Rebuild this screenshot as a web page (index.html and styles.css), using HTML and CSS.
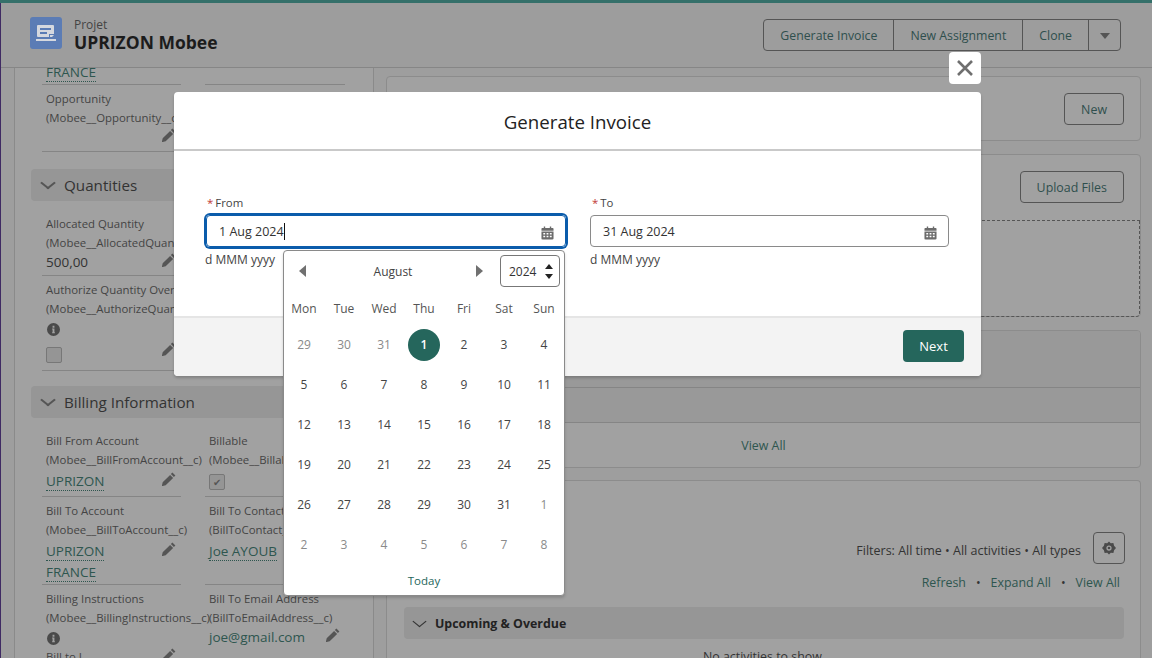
FILE: index.html
```html
<!DOCTYPE html>
<html lang="en">
<head>
    <meta charset="UTF-8">
    <title>UPRIZON Mobee</title>
    <link rel="stylesheet" href="styles.css">
</head>
<body>
    <svg class="sprites" width="0" height="0">
        <symbol id="pencil" viewBox="0 0 14 14"><path d="M10.400.6l3 3-1.500 1.500-3-3zM8.100 2.900l3 3-7.400 7.400-3.900.9.900-3.900z"/></symbol>
        <symbol id="info" viewBox="0 0 14 14"><path fill-rule="evenodd" d="M7 0a7 7 0 1 1 0 14A7 7 0 0 1 7 0zM6 3v2h2V3zM5.500 6v1H6v3H5.500v1h3v-1H8V6z"/></symbol>
        <symbol id="calendar" viewBox="0 0 14 14"><path fill-rule="evenodd" d="M3 0h1.500v1.500h5V0H11v1.500h1.500c.5 0 1 .5 1 1V4.500H.5v-2c0-.5.5-1 1-1H3zM.5 5.500h13V13c0 .5-.5 1-1 1h-11c-.5 0-1-.5-1-1zM2.500 7v1.500h2V7zm3.500 0v1.500h2V7zm3.500 0v1.500h2V7zM2.500 10v1.500h2V10zm3.500 0v1.500h2V10zm3.500 0v1.500h2V10z"/></symbol>
    </svg>

    <header class="page-head">
        <div class="record">
            <div class="record-icon">
                <svg viewBox="0 0 32 32" width="32" height="32">
                    <path fill="#d5d8df" d="M8 8h15a1 1 0 0 1 1 1v8h-5v3H8a1 1 0 0 1-1-1V9a1 1 0 0 1 1-1z"/>
                    <path fill="#5b7cb5" d="M10 11h11v2H10zM10 15h7v2h-7z"/>
                    <path fill="#d5d8df" d="M20 18h4l-2 2h-2zM6 22h20v2H6z"/>
                </svg>
            </div>
            <div>
                <div class="record-type">Projet</div>
                <div class="record-name">UPRIZON Mobee</div>
            </div>
        </div>
        <div class="actions">
            <button>Generate Invoice</button>
            <button>New Assignment</button>
            <button>Clone</button>
            <button class="more"><span class="caret-down"></span></button>
        </div>
    </header>

    <main class="content">
        <section class="details">
            <div class="fields first">
                <div class="field"><div class="value"><a>FRANCE</a></div></div>
                <div class="field"></div>
            </div>
            <div class="fields row-opportunity">
                <div class="field">
                    <div class="label">Opportunity</div>
                    <div class="label">(Mobee__Opportunity__c)</div>
                    <div class="value end"><svg class="pencil"><use href="#pencil"/></svg></div>
                </div>
                <div class="field"></div>
            </div>

            <h2 class="section-head"><span class="chevron"></span>Quantities</h2>
            <div class="fields row-quantity">
                <div class="field">
                    <div class="label">Allocated Quantity</div>
                    <div class="label">(Mobee__AllocatedQuantity__c)</div>
                    <div class="value">500,00<svg class="pencil"><use href="#pencil"/></svg></div>
                </div>
                <div class="field"></div>
            </div>
            <div class="fields row-authorize">
                <div class="field">
                    <div class="label">Authorize Quantity Over</div>
                    <div class="label">(Mobee__AuthorizeQuantityOver__c)</div>
                    <svg class="info"><use href="#info"/></svg>
                    <div class="value"><span class="checkbox"></span><svg class="pencil"><use href="#pencil"/></svg></div>
                </div>
                <div class="field"></div>
            </div>

            <h2 class="section-head billing"><span class="chevron"></span>Billing Information</h2>
            <div class="fields row-from">
                <div class="field">
                    <div class="label">Bill From Account</div>
                    <div class="label">(Mobee__BillFromAccount__c)</div>
                    <div class="value link"><a>UPRIZON</a><svg class="pencil"><use href="#pencil"/></svg></div>
                </div>
                <div class="field">
                    <div class="label">Billable</div>
                    <div class="label">(Mobee__Billable__c)</div>
                    <div class="value link"><span class="checkbox checked">&#10004;</span></div>
                </div>
            </div>
            <div class="fields">
                <div class="field">
                    <div class="label">Bill To Account</div>
                    <div class="label">(Mobee__BillToAccount__c)</div>
                    <div class="value link"><a>UPRIZON</a><svg class="pencil"><use href="#pencil"/></svg></div>
                    <div class="value"><a>FRANCE</a></div>
                </div>
                <div class="field">
                    <div class="label">Bill To Contact</div>
                    <div class="label">(BillToContact__c)</div>
                    <div class="value link"><a>Joe AYOUB</a></div>
                </div>
            </div>
            <div class="fields">
                <div class="field">
                    <div class="label">Billing Instructions</div>
                    <div class="label">(Mobee__BillingInstructions__c)</div>
                    <svg class="info"><use href="#info"/></svg>
                    <div class="label cut">Bill to L<svg class="pencil"><use href="#pencil"/></svg></div>
                </div>
                <div class="field">
                    <div class="label">Bill To Email Address</div>
                    <div class="label">(BillToEmailAddress__c)</div>
                    <div class="value mail"><span class="plain-link">joe@gmail.com</span><svg class="pencil"><use href="#pencil"/></svg></div>
                </div>
            </div>
        </section>

        <section class="side">
            <div class="card card-new"><button class="btn">New</button></div>
            <div class="card card-files">
                <div class="card-row"><button class="btn">Upload Files</button></div>
                <div class="dropzone"></div>
            </div>
            <div class="card card-list">
                <div class="band"></div>
                <div class="band thin"></div>
                <a class="view-all">View All</a>
            </div>
            <div class="card card-activity">
                <div class="filters">
                    <span>Filters: All time &bull; All activities &bull; All types</span>
                    <button class="btn gear">
                        <svg viewBox="0 0 16 16" width="14" height="14"><path fill="#4a4a4a" fill-rule="evenodd" d="M8 .5l2 2.200 3-.4.8 3L16 8l-2.200 2.700-.8 3-3-.4L8 15.500l-2-2.200-3 .4-.8-3L0 8l2.200-2.700.8-3 3 .4zM8 5a3 3 0 1 0 0 6 3 3 0 0 0 0-6zm0 1.500a1.500 1.500 0 1 1 0 3 1.500 1.500 0 0 1 0-3z"/></svg>
                    </button>
                </div>
                <div class="links"><a>Refresh</a><b>&bull;</b><a>Expand All</a><b>&bull;</b><a>View All</a></div>
                <div class="upcoming"><span class="chevron small"></span>Upcoming &amp; Overdue</div>
                <div class="empty">No activities to show.</div>
            </div>
        </section>
    </main>

    <button class="modal-close">
        <svg viewBox="0 0 20 20" width="20" height="20"><path d="M3 3l14 14M17 3L3 17" stroke="#6f6f6f" stroke-width="2.600" fill="none"/></svg>
    </button>
    <div class="modal-box">
        <h1 class="modal-title">Generate Invoice</h1>
        <div class="modal-body">
            <div class="date-field">
                <label><i>*</i>From</label>
                <div class="date-input focused"><span>1 Aug 2024</span><span class="text-cursor"></span><svg class="cal-icon"><use href="#calendar"/></svg></div>
                <div class="hint">d MMM yyyy</div>
            </div>
            <div class="date-field second">
                <label><i>*</i>To</label>
                <div class="date-input"><span>31 Aug 2024</span><svg class="cal-icon"><use href="#calendar"/></svg></div>
                <div class="hint">d MMM yyyy</div>
            </div>
        </div>
        <div class="modal-foot"><button class="btn-next">Next</button></div>
    </div>

    <div class="datepicker">
        <div class="dp-head">
            <span class="arrow left"></span>
            <span class="dp-month">August</span>
            <span class="arrow right"></span>
            <div class="dp-year">2024<span class="spin"><span class="up"></span><span class="down"></span></span></div>
        </div>
        <div class="dp-grid" id="grid"></div>
        <a class="dp-today">Today</a>
    </div>

    <script>
        const grid = document.getElementById('grid');
        const names = ['Mon', 'Tue', 'Wed', 'Thu', 'Fri', 'Sat', 'Sun'];
        names.forEach(n => {
            const d = document.createElement('div');
            d.className = 'dp-name';
            d.textContent = n;
            grid.appendChild(d);
        });

        const days = [29, 30, 31];
        for (let i = 1; i <= 31; i++) days.push(i);
        for (let i = 1; i <= 8; i++) days.push(i);

        days.forEach((n, i) => {
            const d = document.createElement('div');
            d.className = 'dp-day';
            if (i < 3 || i >= 34) d.classList.add('other');
            if (i === 3) d.classList.add('selected');
            d.innerHTML = '<span>' + n + '</span>';
            grid.appendChild(d);
        });
    </script>
</body>
</html>
```

FILE: styles.css
```css
* {
    box-sizing: border-box;
}

html, body {
    margin: 0;
    height: 100%;
}

body {
    width: 1152px;
    height: 658px;
    overflow: hidden;
    position: relative;
    background: #9e9e9e;
    color: #333;
    font-family: "Open Sans", "Noto Sans", sans-serif;
    font-size: 12px;
}

/* thin purple edge of the window behind */
body::after {
    content: "";
    position: absolute;
    left: 0;
    top: 3px;
    bottom: 0;
    width: 1px;
    background: #3f2a63;
    z-index: 5;
}

button {
    font-family: inherit;
}

.sprites {
    position: absolute;
}

/* page header */
.page-head {
    height: 68px;
    padding: 14px 31px 0 30px;
    display: flex;
    justify-content: space-between;
    align-items: flex-start;
    background: #9d9d9d;
    border-top: 3px solid #35706a;
    border-bottom: 1px solid #868686;
    position: relative;
    z-index: 2;
}

.record {
    display: flex;
    gap: 12px;
}

.record-icon {
    width: 32px;
    height: 32px;
    border-radius: 3px;
    background: #5b7cb5;
}

.record-type {
    font-size: 12px;
    line-height: 14px;
    padding-top: 1px;
    color: #444;
}

.record-name {
    font-size: 17.500px;
    line-height: 20px;
    font-weight: 700;
    color: #1c1c1c;
}

.actions {
    display: flex;
    height: 32px;
    margin-top: 2px;
    border: 1px solid #555;
    border-radius: 4px;
}

.actions button {
    padding: 0 16px;
    border: 0;
    border-right: 1px solid #555;
    background: transparent;
    color: #2f4f4d;
    font-size: 12.300px;
}

.actions .more {
    width: 31px;
    padding: 0;
    border-right: 0;
}

.caret-down {
    display: inline-block;
    border: 5px solid transparent;
    border-top: 6px solid #555;
    border-bottom: 0;
    vertical-align: middle;
}

/* content columns */
.content {
    display: flex;
    gap: 12px;
    padding-left: 14px;
}

.details {
    width: 360px;
    height: 590px;
    padding-left: 16px;
    background: #a1a1a1;
    border-left: 1px solid #8a8a8a;
    border-right: 1px solid #8a8a8a;
    overflow: hidden;
    flex: none;
}

.fields {
    display: grid;
    grid-template-columns: 139px 140px;
    gap: 24px;
    padding-left: 11px;
    white-space: nowrap;
}

.fields.first {
    margin-top: -6px;
}

.field {
    padding: 4px 0 1px 4px;
    border-bottom: 1px solid #858585;
    min-width: 0;
}

.first .field {
    padding: 0 0 0 4px;
    height: 23px;
}

.row-opportunity .field {
    height: 67px;
}

.row-quantity .field {
    height: 66px;
}

.row-authorize .field {
    height: 95px;
}

.row-from .field {
    height: 70px;
}

.label {
    line-height: 19px;
    font-size: 11.400px;
    color: #444;
}

.label.cut {
    display: flex;
    justify-content: space-between;
    padding-right: 5px;
    margin-top: 2px;
}

.value {
    display: flex;
    justify-content: space-between;
    line-height: 21px;
    height: 21px;
    font-size: 13.500px;
    padding-right: 5px;
    color: #333;
}

.value.link {
    margin-top: 2px;
}

.value.end {
    justify-content: flex-end;
}

.value.mail {
    width: 131px;
    padding-right: 0;
}

.info + .value {
    margin-top: 5px;
}

.value a {
    color: #2e564f;
    border-bottom: 1px dotted #2e564f;
    height: 20px;
    line-height: 20px;
}

.plain-link {
    color: #2e564f;
}

.pencil {
    width: 14px;
    height: 14px;
    fill: #555;
    margin-top: 1px;
    flex: none;
}

.info {
    display: block;
    width: 13px;
    height: 13px;
    fill: #4a4a4a;
    margin: 5px 0 0 1px;
}

.checkbox {
    display: block;
    width: 16px;
    height: 16px;
    margin-top: 6px;
    border: 1px solid #777;
    border-radius: 2px;
    background: #959595;
    color: #555;
    font-size: 10px;
    line-height: 14px;
    text-align: center;
}

.checkbox.checked {
    margin-top: 3px;
}

.section-head {
    display: flex;
    align-items: center;
    gap: 10px;
    height: 32px;
    margin: 17px 16px 9px 0;
    padding-left: 10px;
    background: #969696;
    border-radius: 4px;
    font-size: 15.200px;
    font-weight: 400;
    color: #333;
}

.section-head.billing {
    margin-top: 15px;
}

.chevron {
    width: 10px;
    height: 10px;
    margin: -5px 1px 0 2px;
    border-right: 2px solid #555;
    border-bottom: 2px solid #555;
    transform: rotate(45deg) skew(-6deg, -6deg);
    flex: none;
}

.chevron.small {
    width: 9px;
    height: 9px;
    margin: -4px 0 0 0;
    border-color: #333;
    border-width: 1.500px;
}

/* right column */
.side {
    width: 755px;
    display: flex;
    flex-direction: column;
    gap: 13px;
    padding-top: 8px;
    flex: none;
}

.card {
    background: #a1a1a1;
    border: 1px solid #8c8c8c;
    border-radius: 4px;
}

.btn {
    height: 32px;
    padding: 0 16px;
    border: 1px solid #555;
    border-radius: 4px;
    background: transparent;
    color: #2f4f4d;
    font-size: 12.400px;
}

.card-new {
    height: 65px;
    padding: 16px 16px 0 0;
    text-align: right;
}

.card-files {
    height: 163px;
}

.card-row {
    padding: 16px 16px 0 0;
    text-align: right;
}

.dropzone {
    height: 97px;
    margin-top: 17px;
    border-top: 1px dashed #555;
    border-right: 1px dashed #555;
    border-bottom: 1px dashed #555;
    border-radius: 0 0 4px 0;
}

.card-list {
    height: 138px;
    text-align: center;
}

.band {
    height: 57px;
    background: #999;
    border-bottom: 1px solid #858585;
    border-radius: 4px 4px 0 0;
}

.band.thin {
    height: 35px;
    border-radius: 0;
}

.view-all {
    display: block;
    line-height: 46px;
    color: #2e564f;
    font-size: 12.400px;
}

.card-activity {
    flex: 1;
    padding: 51px 16px 0 17px;
    border-bottom: 0;
    margin-top: -1px;
}

.filters {
    display: flex;
    justify-content: flex-end;
    align-items: center;
    gap: 12px;
    height: 32px;
    margin-right: -1px;
    color: #333;
    font-size: 12.500px;
}

.filters span {
    margin-top: 4px;
}

.gear {
    width: 32px;
    padding: 0;
    display: flex;
    align-items: center;
    justify-content: center;
}

.links {
    display: flex;
    justify-content: flex-end;
    gap: 10px;
    margin-top: 10px;
    padding-right: 4px;
    line-height: 18px;
    font-size: 12.400px;
    color: #2e564f;
}

.links b {
    color: #333;
    font-weight: 400;
}

.upcoming {
    display: flex;
    align-items: center;
    gap: 11px;
    height: 32px;
    margin-top: 15px;
    padding-left: 11px;
    background: #969696;
    border-radius: 4px;
    font-weight: 700;
    font-size: 12.400px;
    color: #222;
}

.empty {
    margin-top: 9px;
    text-align: center;
    font-size: 12.400px;
    color: #333;
}

/* modal */
.modal-box {
    position: absolute;
    left: 174px;
    top: 92px;
    width: 807px;
    height: 284px;
    display: flex;
    flex-direction: column;
    background: #fff;
    border-radius: 4px;
    box-shadow: 0 2px 3px rgba(0, 0, 0, 0.2);
    z-index: 3;
}

.modal-close {
    position: absolute;
    left: 949px;
    top: 52px;
    width: 32px;
    height: 32px;
    padding: 6px;
    border: 0;
    border-radius: 4px;
    background: #fff;
    z-index: 3;
}

.modal-title {
    height: 59px;
    margin: 0;
    border-bottom: 2px solid #c9c9c9;
    font-size: 18.700px;
    font-weight: 400;
    line-height: 60px;
    text-align: center;
    color: #222;
}

.modal-body {
    flex: 1;
    display: flex;
    padding: 43px 32px 0 32px;
    gap: 24px;
}

.date-field {
    width: 360px;
    color: #444;
}

.date-field.second {
    width: 359px;
}

.date-field label {
    display: block;
    line-height: 18px;
    margin-bottom: 3px;
    font-size: 11.400px;
}

.date-field i {
    margin: 0 2px 0 1px;
    color: #c23934;
    font-style: normal;
}

.second i {
    margin-left: 2px;
}

.date-input {
    display: flex;
    align-items: center;
    height: 32px;
    padding: 0 12px;
    border: 1px solid #8a8a8a;
    border-radius: 4px;
    font-size: 12.500px;
    color: #333;
}

.date-input.focused {
    border-color: #0b5cab;
    box-shadow: 0 0 0 2px #0b5cab;
}

.text-cursor {
    width: 1px;
    height: 17px;
    background: #111;
    margin-right: auto;
}

.cal-icon {
    width: 13px;
    height: 14px;
    margin-left: auto;
    fill: #6b6b6b;
    margin-top: 3px;
    position: relative;
    left: 1px;
}

.hint {
    margin-top: 4px;
    line-height: 18px;
    color: #444;
}

.focused + .hint {
    margin-left: -1px;
}

.modal-foot {
    height: 60px;
    padding: 12px 17px 0 0;
    text-align: right;
    background: #f3f3f3;
    border-top: 2px solid #e5e5e5;
    border-radius: 0 0 4px 4px;
}

.btn-next {
    width: 61px;
    height: 32px;
    border: 0;
    border-radius: 4px;
    background: #25665c;
    color: #fff;
    font-size: 13px;
    font-weight: 500;
}

/* date picker */
.datepicker {
    position: absolute;
    left: 283px;
    top: 250px;
    width: 282px;
    height: 346px;
    background: #fff;
    border: 1px solid #8a8a8a;
    border-radius: 4px;
    box-shadow: 0 2px 3px rgba(0, 0, 0, 0.16);
    z-index: 4;
}

.dp-head {
    display: flex;
    align-items: center;
    height: 36px;
    margin-top: 2px;
    padding: 0 4px 0 15px;
}

.arrow {
    width: 0;
    height: 0;
    border: 6px solid transparent;
    flex: none;
}

.arrow.left {
    border-right: 7px solid #707070;
    border-left: 0;
}

.arrow.right {
    border-left: 7px solid #707070;
    border-right: 0;
}

.dp-month {
    flex: 1;
    text-align: center;
    color: #444;
    padding-left: 4px;
}

.dp-year {
    display: flex;
    align-items: center;
    justify-content: space-between;
    width: 60px;
    height: 32px;
    margin-left: 17px;
    padding: 0 6px 0 8px;
    border: 1px solid #777;
    border-radius: 4px;
    color: #333;
}

.spin {
    display: flex;
    flex-direction: column;
    gap: 5px;
}

.spin span {
    border: 4px solid transparent;
    width: 0;
    height: 0;
}

.spin .up {
    border-bottom: 5px solid #222;
    border-top: 0;
}

.spin .down {
    border-top: 5px solid #222;
    border-bottom: 0;
}

.dp-grid {
    display: grid;
    grid-template-columns: repeat(7, 40px);
    grid-template-rows: 32px;
    grid-auto-rows: 40px;
    margin-top: 4px;
    text-align: center;
}

.dp-name {
    line-height: 32px;
    color: #555;
}

.dp-day {
    display: flex;
    align-items: center;
    justify-content: center;
    color: #444;
}

.dp-day.other {
    color: #8a8a8a;
}

.dp-day span {
    width: 32px;
    height: 32px;
    line-height: 32px;
    border-radius: 50%;
}

.dp-day.selected span {
    background: #25665c;
    color: #fff;
    font-weight: 600;
}

.dp-today {
    display: block;
    margin-top: 7px;
    text-align: center;
    line-height: 18px;
    font-size: 11.500px;
    color: #25665c;
}
```
